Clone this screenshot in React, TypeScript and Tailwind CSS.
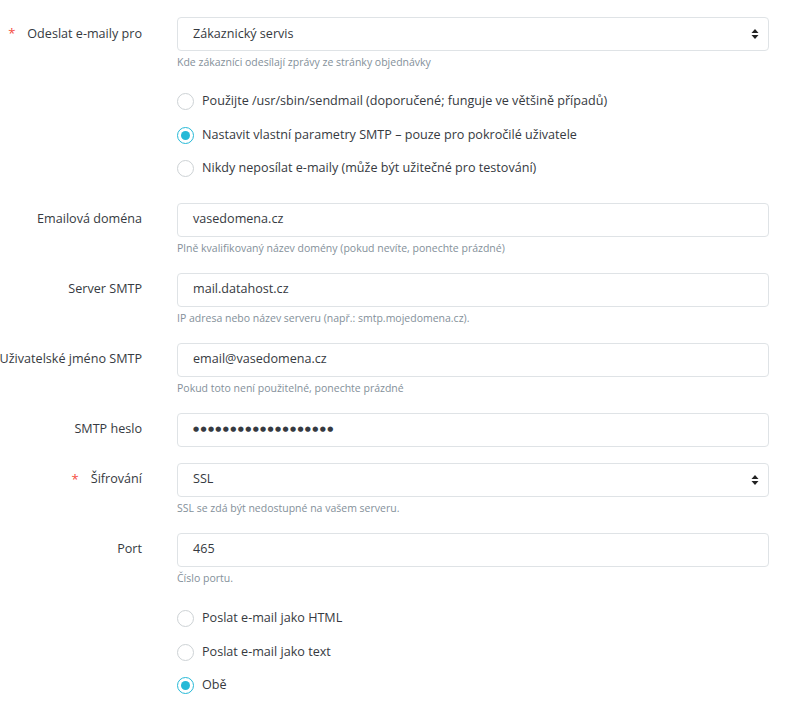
import React from "react";

const font = { fontFamily: '"Open Sans", "Noto Sans", sans-serif' };

function SelectArrows() {
  return (
    <svg width="8" height="12" viewBox="0 0 8 12" className="text-[#222]">
      <path d="M4 1 L7.5 5 H0.5 Z" fill="currentColor" />
      <path d="M4 11 L7.5 7 H0.5 Z" fill="currentColor" />
    </svg>
  );
}

function Label({ text, required }: { text?: string; required?: boolean }) {
  return (
    <div className="flex h-[34px] w-[142px] shrink-0 items-center justify-end whitespace-nowrap text-[12.6px] text-[#363a41]">
      {required ? <span className="mr-[12px] text-[13px] text-[#f54c3e]">*</span> : null}
      {text}
    </div>
  );
}

function Field({
  value,
  select,
  password,
}: {
  value: string;
  select?: boolean;
  password?: boolean;
}) {
  return (
    <div className="flex h-[34px] items-center justify-between rounded-[4px] border border-[#dfe3e6] bg-white pl-[15px] pr-[9px] text-[12.6px] text-[#363a41]">
      {password ? (
        <span className="text-[7px] tracking-[1.35px] text-[#363a41]" style={{ fontFamily: '"DejaVu Sans", sans-serif' }}>
          {value}
        </span>
      ) : (
        <span>{value}</span>
      )}
      {select ? <SelectArrows /> : null}
    </div>
  );
}

function Help({ text }: { text: string }) {
  return <div className="mt-[3px] h-[17px] text-[10.5px] leading-[17px] text-[#84909a]">{text}</div>;
}

function Group({
  label,
  required,
  value,
  help,
  select,
  password,
  mb = "mb-4",
}: {
  label: string;
  required?: boolean;
  value: string;
  help?: string;
  select?: boolean;
  password?: boolean;
  mb?: string;
}) {
  return (
    <div className={`flex ${mb}`}>
      <Label text={label} required={required} />
      <div className="ml-[35px] flex-1">
        <Field value={value} select={select} password={password} />
        {help ? <Help text={help} /> : null}
      </div>
    </div>
  );
}

function Radio({ label, checked }: { label: string; checked?: boolean }) {
  return (
    <div className="flex h-[33.5px] items-center">
      {checked ? (
        <span className="flex h-[17px] w-[17px] items-center justify-center rounded-full border-[1.5px] border-[#25b9d7] bg-white">
          <span className="h-[9px] w-[9px] rounded-full bg-[#25b9d7]" />
        </span>
      ) : (
        <span className="h-[17px] w-[17px] rounded-full border-[1.5px] border-[#cdd2d5] bg-white" />
      )}
      <span className="ml-[8px] text-[12.6px] text-[#363a41]">{label}</span>
    </div>
  );
}

function RadioGroup({ items, checked, mb }: { items: string[]; checked: number; mb: string }) {
  return (
    <div className={`flex ${mb}`}>
      <div className="w-[142px] shrink-0" />
      <div className="ml-[35px] flex-1">
        {items.map((it, i) => (
          <Radio key={it} label={it} checked={i === checked} />
        ))}
      </div>
    </div>
  );
}

export default function App() {
  return (
    <div className="min-h-[708px] w-[800px] bg-white pr-[31px] pt-[17px]" style={font}>
      <Group
        label="Odeslat e-maily pro"
        required
        value="Zákaznický servis"
        select
        help="Kde zákazníci odesílají zprávy ze stránky objednávky"
        mb="mb-[14px]"
      />
      <RadioGroup
        mb="mb-[17px]"
        checked={1}
        items={[
          "Použijte /usr/sbin/sendmail (doporučené; funguje ve většině případů)",
          "Nastavit vlastní parametry SMTP – pouze pro pokročilé uživatele",
          "Nikdy neposílat e-maily (může být užitečné pro testování)",
        ]}
      />
      <Group
        label="Emailová doména"
        value="vasedomena.cz"
        help="Plně kvalifikovaný název domény (pokud nevíte, ponechte prázdné)"
      />
      <Group
        label="Server SMTP"
        value="mail.datahost.cz"
        help="IP adresa nebo název serveru (např.: smtp.mojedomena.cz)."
      />
      <Group
        label="Uživatelské jméno SMTP"
        value="email@vasedomena.cz"
        help="Pokud toto není použitelné, ponechte prázdné"
      />
      <Group label="SMTP heslo" value={"●".repeat(19)} password />
      <Group
        label="Šifrování"
        required
        value="SSL"
        select
        help="SSL se zdá být nedostupné na vašem serveru."
      />
      <Group label="Port" value="465" help="Číslo portu." mb="mb-[15.5px]" />
      <RadioGroup
        mb="mb-0"
        checked={2}
        items={["Poslat e-mail jako HTML", "Poslat e-mail jako text", "Obě"]}
      />
    </div>
  );
}
